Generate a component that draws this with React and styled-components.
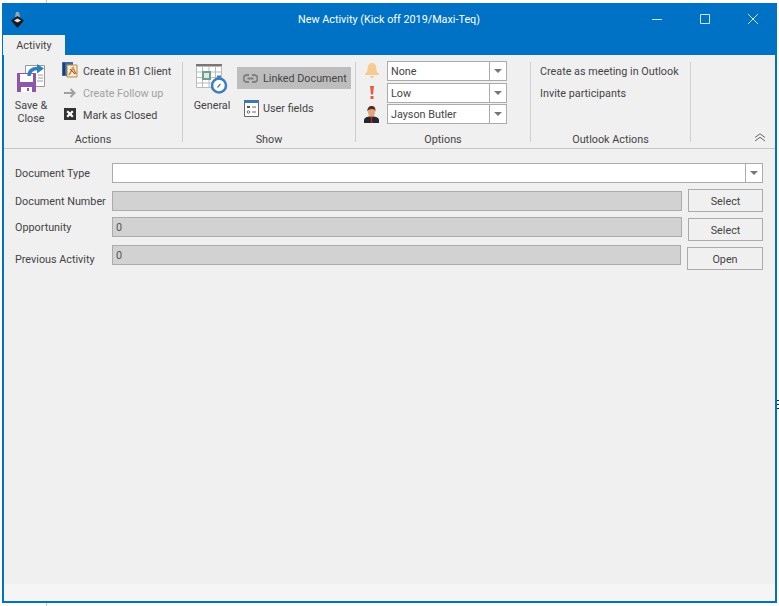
import React from "react";
import styled, { createGlobalStyle } from "styled-components";

const GlobalStyle = createGlobalStyle`
  html, body {
    margin: 0;
    height: 100%;
    overflow: hidden;
    font-family: Roboto, "Noto Sans", sans-serif;
    background:
      linear-gradient(#222, #222) 777px 400px / 2px 1px no-repeat,
      linear-gradient(#222, #222) 777px 404px / 2px 1px no-repeat,
      linear-gradient(#222, #222) 777px 408px / 2px 1px no-repeat,
      linear-gradient(#c8c8c8, #c8c8c8) 46px 0 / 1px 100% no-repeat,
      #fff;
  }
`;

const SaveIcon = () => (
  <svg width="29" height="28" viewBox="0 0 29 28">
    <path d="M8.500 1.500h19v21h-19z" fill="#fff" stroke="#9a9a9a" />
    <path d="M21 11h5M21 14h5M20 17h6" stroke="#9a9a9a" />
    <path d="M0 9h19v19H0z" fill="#8f55a8" />
    <path d="M3 10h13v8H3z" fill="#fff" />
    <path d="M4 23h11v5H4z" fill="#fff" />
    <path d="M10 24h2v3h-2z" fill="#8f55a8" />
    <path d="M12 12c0-5 3-7.500 9-7.500" fill="none" stroke="#2f7fc1" strokeWidth="3.500" />
    <path d="M20 0l7 4.500-7 5z" fill="#2f7fc1" />
  </svg>
);

const ClientIcon = () => (
  <svg width="16" height="17" viewBox="0 0 16 17">
    <path d="M0 0h11v14H0z" fill="#3c6ea5" />
    <path d="M1 1h2v12H1z" fill="#173f6c" />
    <path d="M5 3h10v12H5z" fill="#f6ecd6" stroke="#b08b4c" />
    <path d="M7 13l4-7 3 6" fill="none" stroke="#c47a22" strokeWidth="1.500" />
    <path d="M8 7l5 5" stroke="#c0392b" />
    <circle cx="11" cy="6" r="1.500" fill="#d9a441" />
  </svg>
);

const ArrowIcon = () => (
  <svg width="12" height="10" viewBox="0 0 12 10">
    <path d="M0 5h10M6.500 1l4 4-4 4" fill="none" stroke="#a0a0a0" strokeWidth="2" />
  </svg>
);

const CloseBoxIcon = () => (
  <svg width="12" height="12" viewBox="0 0 12 12">
    <path d="M0 0h12v12H0z" fill="#333" />
    <path d="M3.200 3.200l5.600 5.600M8.800 3.200l-5.600 5.600" stroke="#fff" strokeWidth="2.200" />
  </svg>
);

const CalendarIcon = () => (
  <svg width="32" height="31" viewBox="0 0 32 31">
    <path d="M0 .5h26v23H0z" fill="#fff" />
    <path d="M0 0h26v2.500H0z" fill="#777" />
    <path d="M.5 2v21.500h25V2M6.500 2v21M13 2v21M19.500 2v21M0 8h26M0 13.500h26M0 19h26" fill="none" stroke="#bbb" />
    <path d="M7 8h7v7H7z" fill="#dfe8e4" stroke="#6f9e90" strokeWidth="2" />
    <circle cx="23" cy="21.500" r="7" fill="#fff" stroke="#3b7fc0" strokeWidth="2.600" />
    <path d="M21 11.500h4v2h-1v2h-2v-2h-1z" fill="#3b7fc0" />
    <path d="M21.500 23.500l3-3.500" stroke="#3b7fc0" strokeWidth="1.200" />
  </svg>
);

const LinkIcon = () => (
  <svg width="15" height="9" viewBox="0 0 15 9">
    <path d="M6 1H4a3.500 3.500 0 0 0 0 7h2M9 1h2a3.500 3.500 0 0 1 0 7H9M4.500 4.500h6" fill="none" stroke="#808080" strokeWidth="2" />
  </svg>
);

const FieldsIcon = () => (
  <svg width="15" height="17" viewBox="0 0 15 17">
    <path d="M.5.500h14v16H.5z" fill="#fff" stroke="#666" />
    <path d="M0 0h15v3H0z" fill="#3f78b0" />
    <path d="M3 6h3v2H3z" fill="#555" />
    <path d="M8 7h4M8 12h4" stroke="#666" />
    <circle cx="4.500" cy="12" r="1.300" fill="none" stroke="#666" />
  </svg>
);

const BellIcon = () => (
  <svg width="14" height="15" viewBox="0 0 14 15">
    <path d="M7 0c3 0 4.300 2.500 4.300 5.500 0 2.500 1 4 2.700 5.500v1H0v-1c1.700-1.500 2.700-3 2.700-5.500C2.700 2.500 4 0 7 0z" fill="#f5cb92" />
    <path d="M5 13h4l-1 2H6z" fill="#f5cb92" />
  </svg>
);

const AlertIcon = () => (
  <svg width="4" height="13" viewBox="0 0 4 13">
    <path d="M0 0h4L3 8.500H1z" fill="#e2603f" />
    <path d="M.5 10h3v3h-3z" fill="#e2603f" />
  </svg>
);

const PersonIcon = () => (
  <svg width="15" height="17" viewBox="0 0 15 17">
    <path d="M0 17v-3c0-2 2-3 5-3.500h5c3 .5 5 1.500 5 3.500v3z" fill="#23272e" />
    <path d="M5.500 10.500h4L8 12.500l.6 4.500h-2L7 12.500z" fill="#b3262a" />
    <ellipse cx="7.500" cy="6" rx="3.500" ry="4.500" fill="#dfa67c" />
    <path d="M3.500 5.500C3 2 5 0 7.800 0s4 2.200 3.600 5.500c-.6-1.800-1.500-2.500-3.400-2.500S4.200 3.700 3.500 5.500z" fill="#5a2c17" />
  </svg>
);

const Window = styled.div`
  box-sizing: border-box;
  margin: 3px 0 0 2px;
  width: 775px;
  height: 600px;
  border: solid #0072c6;
  border-width: 0 2px 2px 2px;
  background: #f0f0f0;
  display: flex;
  flex-direction: column;
  font-size: 10.800px;
  color: #444;
`;

const TitleBar = styled.div`
  height: 32px;
  margin: 0 -2px;
  padding: 0 10px 0 9px;
  background: #0072c6;
  display: grid;
  grid-template-columns: 1fr auto 1fr;
  align-items: center;
  color: #fff;
`;

const WindowLogo = styled.svg`
  display: block;
`;

const Controls = styled.div`
  justify-self: end;
  margin-right: 9px;
  display: flex;
  gap: 38px;
  align-items: center;
`;

const TabStrip = styled.div`
  height: 20px;
  margin: 0 -2px;
  background: #0072c6;
  padding-left: 1px;
  display: flex;
`;

const Tab = styled.div`
  width: 62px;
  background: #f0f0f0;
  text-align: center;
  line-height: 22px;
`;

const Ribbon = styled.div`
  position: relative;
  height: 94px;
  flex: none;
  border-bottom: 1px solid #c6c6c6;
  display: flex;
  box-sizing: border-box;
`;

const Group = styled.div`
  width: ${(p) => p.$width}px;
  flex: none;
  box-sizing: border-box;
  margin-top: 7px;
  height: 80px;
  border-right: 1px solid #cfcfcf;
`;

const GroupBody = styled.div`
  height: 63px;
  display: flex;
`;

const GroupLabel = styled.div`
  margin-top: 7px;
  text-align: center;
  line-height: 15px;
`;

const LargeButton = styled.div`
  width: ${(p) => p.$width}px;
  margin-left: ${(p) => p.$left}px;
  display: flex;
  flex-direction: column;
  align-items: center;
  text-align: center;
  line-height: 13px;
  padding-top: ${(p) => p.$top}px;
`;

const LargeLabel = styled.div`
  margin-top: ${(p) => p.$gap}px;
`;

const SmallColumn = styled.div`
  display: flex;
  flex-direction: column;
  margin-left: ${(p) => p.$left}px;
  margin-top: ${(p) => p.$top}px;
  gap: ${(p) => p.$gap}px;
`;

const SmallButton = styled.div`
  height: 22px;
  display: flex;
  align-items: center;
  width: ${(p) => (p.$width ? `${p.$width}px` : "auto")};
  background: ${(p) => (p.$active ? "#bdbdbd" : "transparent")};
  color: ${(p) => (p.$disabled ? "#a2a2a2" : "inherit")};
  white-space: nowrap;
`;

const ActionText = styled.span`
  padding-top: 2px;
`;

const IconSlot = styled.span`
  width: ${(p) => p.$width}px;
  padding-left: ${(p) => p.$pad}px;
  box-sizing: border-box;
  flex: none;
  display: flex;
  align-items: center;
`;

const OptionRow = styled.div`
  height: 22px;
  display: flex;
  align-items: center;
`;

const OptionIcon = styled.span`
  width: 31px;
  flex: none;
  display: flex;
  justify-content: center;
`;

const ComboBox = styled.div`
  box-sizing: border-box;
  width: ${(p) => (p.$width ? `${p.$width}px` : "auto")};
  flex: ${(p) => (p.$width ? "none" : 1)};
  height: 20px;
  border: 1px solid #ababab;
  background: #fff;
  display: flex;
  align-items: center;
  line-height: 16px;
`;

const ComboText = styled.div`
  flex: 1;
  padding: 2px 0 0 3px;
`;

const ComboArrow = styled.div`
  width: 16px;
  height: 100%;
  border-left: 1px solid #ababab;
  display: flex;
  align-items: center;
  justify-content: center;
  &::after {
    content: "";
    border: solid transparent;
    border-width: 4px 4px 0;
    border-top-color: #777;
  }
`;

const Collapse = styled.svg`
  position: absolute;
  right: 9px;
  bottom: 6px;
`;

const Form = styled.div`
  flex: 1;
  padding: 14px 12px 0 11px;
`;

const FormRow = styled.div`
  display: flex;
  height: ${(p) => p.$height}px;
  align-items: flex-start;
`;

const FieldLabel = styled.div`
  width: 97px;
  flex: none;
  line-height: 16px;
  margin-top: ${(p) => p.$top}px;
  white-space: nowrap;
`;

const ReadOnly = styled.div`
  box-sizing: border-box;
  width: ${(p) => p.$width}px;
  flex: none;
  height: 20px;
  margin-top: ${(p) => p.$top}px;
  background: #d2d2d2;
  border: 1px solid #ababab;
  padding-left: 3px;
  line-height: 20px;
  color: #555;
`;

const ActionButton = styled.div`
  box-sizing: border-box;
  margin-left: auto;
  width: ${(p) => p.$width}px;
  height: 23px;
  margin-top: ${(p) => p.$top}px;
  border: 1px solid #ababab;
  background: #f0f0f0;
  text-align: center;
  line-height: 23px;
`;

const StatusStrip = styled.div`
  height: 17px;
  flex: none;
  background: #f5f5f5;
`;

export default function App() {
  return (
    <>
      <GlobalStyle />
      <Window>
        <TitleBar>
          <WindowLogo width="13" height="17" viewBox="0 0 13 17">
            <path d="M5 1h3l1 5H4z" fill="#9aa7b3" />
            <path d="M6.500 5L13 9.500 6.500 17 0 9.500z" fill="#1a1a1a" />
            <path d="M3 9.500l3.500-2 3.500 2-3.500 2z" fill="#dfe5ea" />
          </WindowLogo>
          <div>New Activity (Kick off 2019/Maxi-Teq)</div>
          <Controls>
            <svg width="10" height="10" viewBox="0 0 10 10">
              <path d="M0 5.500h10" stroke="#cfe3f4" />
            </svg>
            <svg width="10" height="10" viewBox="0 0 10 10">
              <path d="M.5.500h9v9h-9z" fill="none" stroke="#cfe3f4" />
            </svg>
            <svg width="10" height="10" viewBox="0 0 10 10">
              <path d="M0 0l10 10M10 0L0 10" stroke="#cfe3f4" />
            </svg>
          </Controls>
        </TitleBar>
        <TabStrip>
          <Tab>Activity</Tab>
        </TabStrip>
        <Ribbon>
          <Group $width={179}>
            <GroupBody>
              <LargeButton $width={52} $left={1} $top={2}>
                <SaveIcon />
                <LargeLabel $gap={7}>
                  Save &amp;
                  <br />
                  Close
                </LargeLabel>
              </LargeButton>
              <SmallColumn $left={5} $top={-2} $gap={0}>
                <SmallButton>
                  <IconSlot $width={21} $pad={0}>
                    <ClientIcon />
                  </IconSlot>
                  <ActionText>Create in B1 Client</ActionText>
                </SmallButton>
                <SmallButton $disabled>
                  <IconSlot $width={21} $pad={2}>
                    <ArrowIcon />
                  </IconSlot>
                  <ActionText>Create Follow up</ActionText>
                </SmallButton>
                <SmallButton>
                  <IconSlot $width={21} $pad={2}>
                    <CloseBoxIcon />
                  </IconSlot>
                  <ActionText>Mark as Closed</ActionText>
                </SmallButton>
              </SmallColumn>
            </GroupBody>
            <GroupLabel>Actions</GroupLabel>
          </Group>
          <Group $width={173}>
            <GroupBody>
              <LargeButton $width={44} $left={7} $top={2}>
                <CalendarIcon />
                <LargeLabel $gap={4}>General</LargeLabel>
              </LargeButton>
              <SmallColumn $left={3} $top={5} $gap={8}>
                <SmallButton $active $width={114}>
                  <IconSlot $width={26} $pad={6}>
                    <LinkIcon />
                  </IconSlot>
                  Linked Document
                </SmallButton>
                <SmallButton>
                  <IconSlot $width={26} $pad={7}>
                    <FieldsIcon />
                  </IconSlot>
                  User fields
                </SmallButton>
              </SmallColumn>
            </GroupBody>
            <GroupLabel>Show</GroupLabel>
          </Group>
          <Group $width={175}>
            <GroupBody>
              <SmallColumn $left={0} $top={-2} $gap={0}>
                <OptionRow>
                  <OptionIcon>
                    <BellIcon />
                  </OptionIcon>
                  <ComboBox $width={120}>
                    <ComboText>None</ComboText>
                    <ComboArrow />
                  </ComboBox>
                </OptionRow>
                <OptionRow>
                  <OptionIcon>
                    <AlertIcon />
                  </OptionIcon>
                  <ComboBox $width={120}>
                    <ComboText>Low</ComboText>
                    <ComboArrow />
                  </ComboBox>
                </OptionRow>
                <OptionRow>
                  <OptionIcon>
                    <PersonIcon />
                  </OptionIcon>
                  <ComboBox $width={120}>
                    <ComboText>Jayson Butler</ComboText>
                    <ComboArrow />
                  </ComboBox>
                </OptionRow>
              </SmallColumn>
            </GroupBody>
            <GroupLabel>Options</GroupLabel>
          </Group>
          <Group $width={160}>
            <GroupBody>
              <SmallColumn $left={9} $top={-2} $gap={0}>
                <SmallButton>Create as meeting in Outlook</SmallButton>
                <SmallButton>Invite participants</SmallButton>
              </SmallColumn>
            </GroupBody>
            <GroupLabel>Outlook Actions</GroupLabel>
          </Group>
          <Collapse width="12" height="9" viewBox="0 0 12 9">
            <path d="M1 4.500L6 .8l5 3.700M1 8l5-3.700L11 8" fill="none" stroke="#666" />
          </Collapse>
        </Ribbon>
        <Form>
          <FormRow $height={26}>
            <FieldLabel $top={3}>Document Type</FieldLabel>
            <ComboBox>
              <ComboText />
              <ComboArrow />
            </ComboBox>
          </FormRow>
          <FormRow $height={29}>
            <FieldLabel $top={5}>Document Number</FieldLabel>
            <ReadOnly $width={570} $top={2} />
            <ActionButton $width={75} $top={0}>Select</ActionButton>
          </FormRow>
          <FormRow $height={29}>
            <FieldLabel $top={2}>Opportunity</FieldLabel>
            <ReadOnly $width={570} $top={-1}>0</ReadOnly>
            <ActionButton $width={75} $top={0}>Select</ActionButton>
          </FormRow>
          <FormRow $height={29}>
            <FieldLabel $top={5}>Previous Activity</FieldLabel>
            <ReadOnly $width={569} $top={-2}>0</ReadOnly>
            <ActionButton $width={76} $top={0}>Open</ActionButton>
          </FormRow>
        </Form>
        <StatusStrip />
      </Window>
    </>
  );
}
